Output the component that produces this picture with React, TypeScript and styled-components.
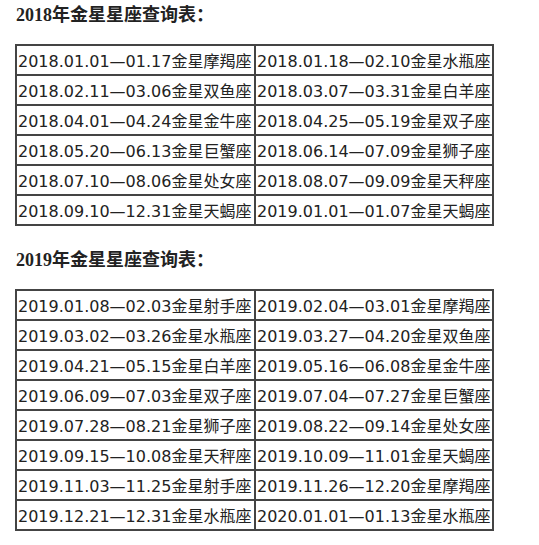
import styled, { createGlobalStyle } from "styled-components";

interface Chart {
    year: string;
    rows: [string, string][];
}

const charts: Chart[] = [
    {
        year: "2018",
        rows: [
            ["2018.01.01—01.17金星摩羯座", "2018.01.18—02.10金星水瓶座"],
            ["2018.02.11—03.06金星双鱼座", "2018.03.07—03.31金星白羊座"],
            ["2018.04.01—04.24金星金牛座", "2018.04.25—05.19金星双子座"],
            ["2018.05.20—06.13金星巨蟹座", "2018.06.14—07.09金星狮子座"],
            ["2018.07.10—08.06金星处女座", "2018.08.07—09.09金星天秤座"],
            ["2018.09.10—12.31金星天蝎座", "2019.01.01—01.07金星天蝎座"],
        ],
    },
    {
        year: "2019",
        rows: [
            ["2019.01.08—02.03金星射手座", "2019.02.04—03.01金星摩羯座"],
            ["2019.03.02—03.26金星水瓶座", "2019.03.27—04.20金星双鱼座"],
            ["2019.04.21—05.15金星白羊座", "2019.05.16—06.08金星金牛座"],
            ["2019.06.09—07.03金星双子座", "2019.07.04—07.27金星巨蟹座"],
            ["2019.07.28—08.21金星狮子座", "2019.08.22—09.14金星处女座"],
            ["2019.09.15—10.08金星天秤座", "2019.10.09—11.01金星天蝎座"],
            ["2019.11.03—11.25金星射手座", "2019.11.26—12.20金星摩羯座"],
            ["2019.12.21—12.31金星水瓶座", "2020.01.01—01.13金星水瓶座"],
        ],
    },
];

const App = () => {
    return (
        <Page>
            <GlobalStyle />
            {charts.map((chart) => (
                <Section key={chart.year}>
                    <Title>{chart.year}年金星星座查询表：</Title>
                    <Table>
                        <colgroup>
                            <col style={{ width: 239 }} />
                            <col style={{ width: 238 }} />
                        </colgroup>
                        <tbody>
                            {chart.rows.map((row) => (
                                <tr key={row[0]}>
                                    <Cell>{row[0]}</Cell>
                                    <Cell>{row[1]}</Cell>
                                </tr>
                            ))}
                        </tbody>
                    </Table>
                </Section>
            ))}
        </Page>
    );
};

const GlobalStyle = createGlobalStyle`
    body {
        margin: 0;
        background: #fff;
    }
`

const Page = styled.div`
    width: 539px;
    height: 545px;
    padding: 5px 0 0 15px;
    box-sizing: border-box;
    display: flex;
    flex-direction: column;
    gap: 24px;
    background: #fff;
`

const Section = styled.div`
    display: flex;
    flex-direction: column;
    gap: 18px;
`

const Title = styled.div`
    height: 21px;
    line-height: 21px;
    padding-left: 1px;
    font-size: 18px;
    font-weight: bold;
    color: #222;
    font-family: "Liberation Serif", "Noto Sans CJK SC", serif;
`

const Table = styled.table`
    width: 477px;
    table-layout: fixed;
    border-collapse: collapse;
    border: 2px solid #444;
`

const Cell = styled.td`
    height: 28px;
    padding: 0 0 0 1px;
    border: 2px solid #444;
    white-space: nowrap;
    overflow: hidden;
    font-size: 16px;
    color: #222;
    font-family: "DejaVu Sans", "Noto Sans CJK SC", sans-serif;
`

export default App;
